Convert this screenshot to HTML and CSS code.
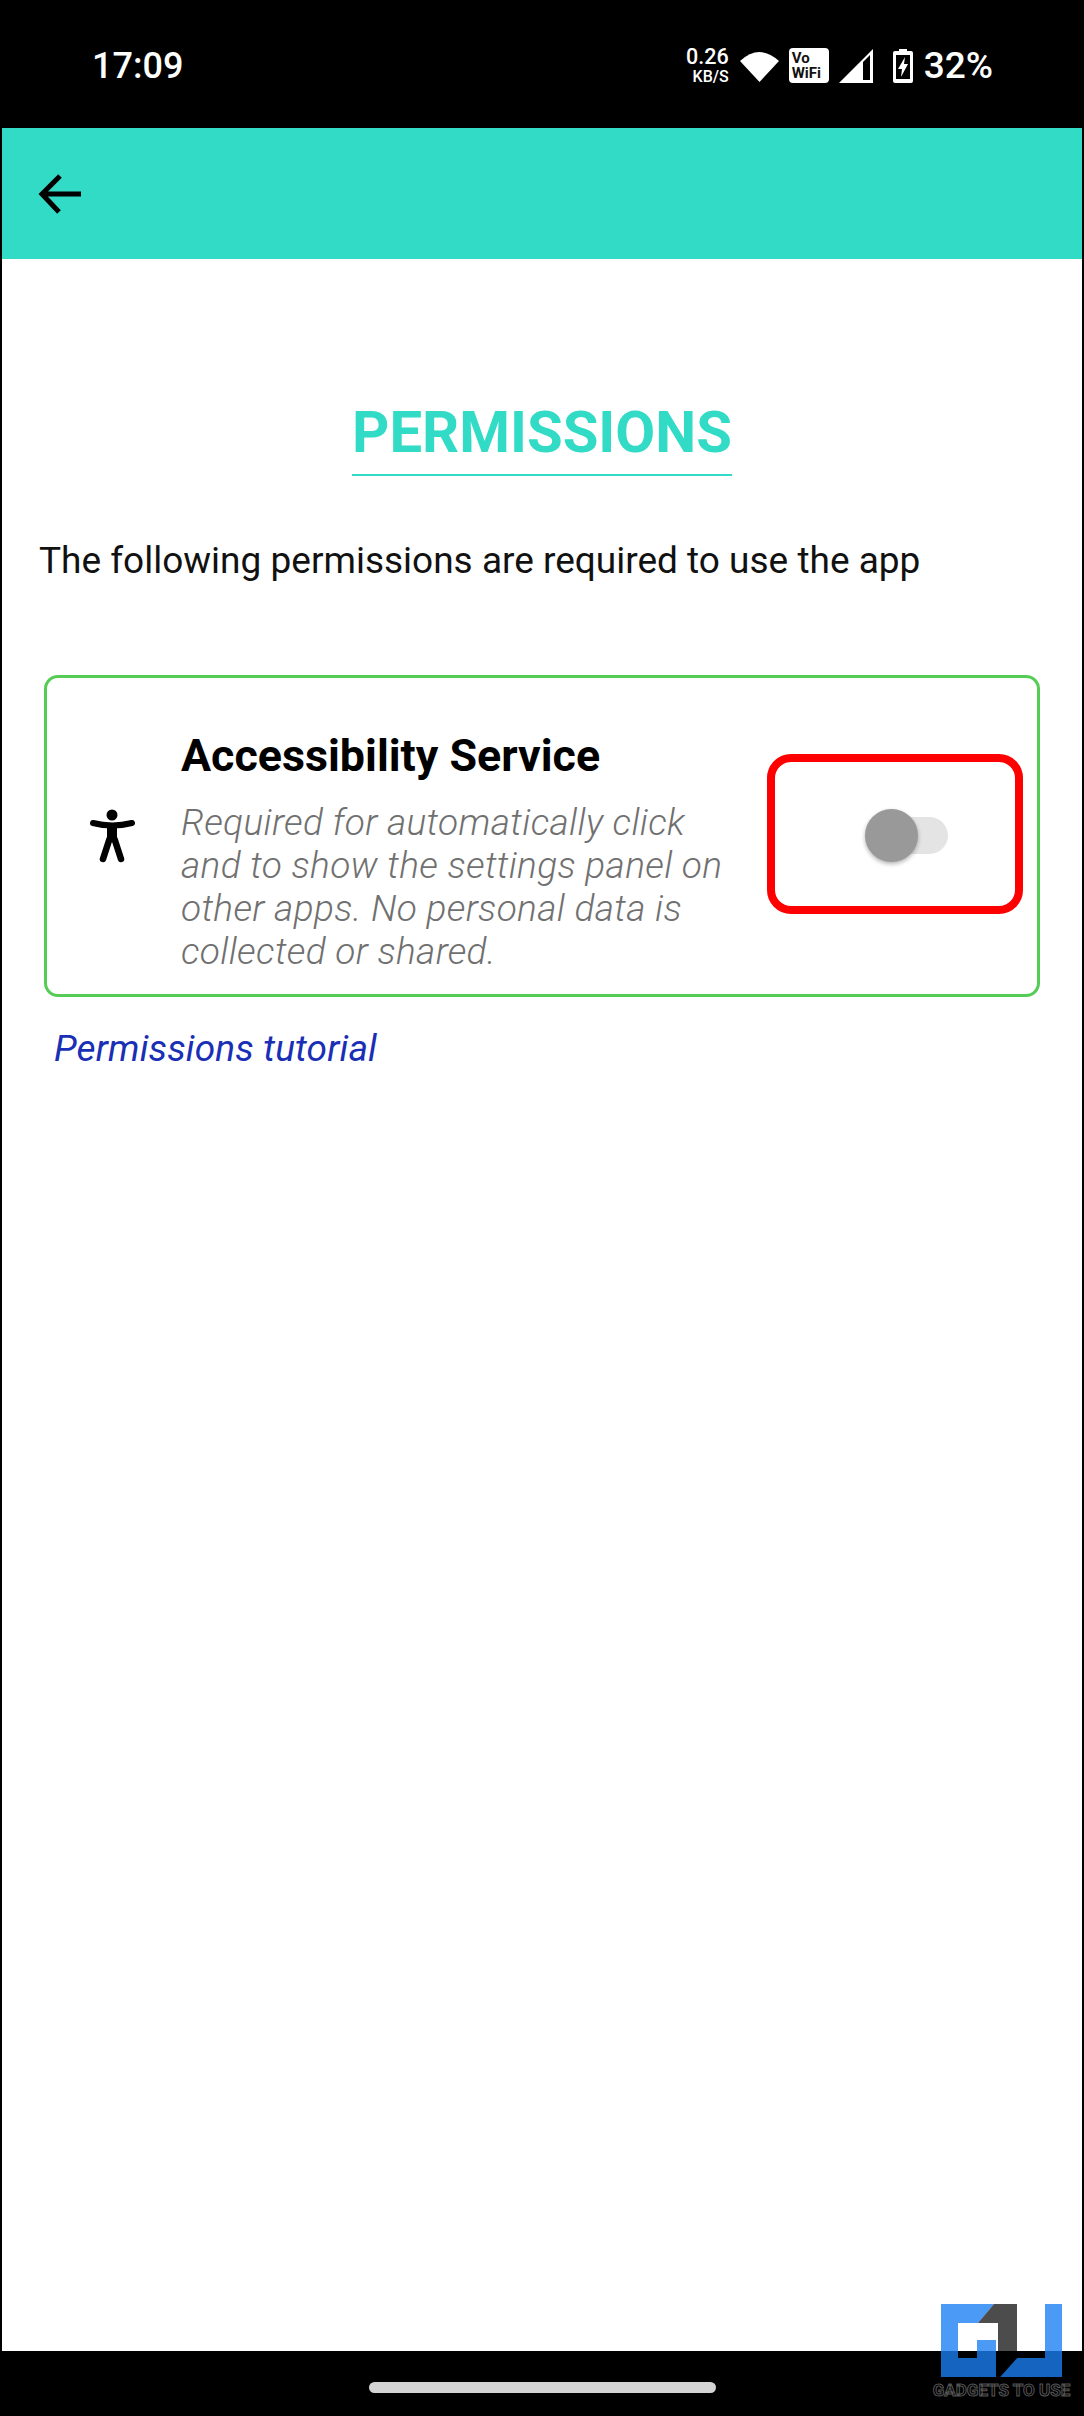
FILE: index.html
```html
<!DOCTYPE html>
<html lang="en">
<head>
  <meta charset="UTF-8">
  <title>Permissions</title>
  <link rel="stylesheet" href="styles.css">
</head>
<body>

<div class="screen">
  <div class="status-bar">
    <span class="clock">17:09</span>
    <div class="status-icons">
      <div class="net-speed"><span>0.26</span><small>KB/S</small></div>
      <svg class="wifi" width="39" height="32" viewBox="0 0 39 32"><path d="M19.5 32 L0 11 Q19.5 -7 39 11 Z" fill="#fff"/></svg>
      <div class="vowifi">Vo<br>WiFi</div>
      <svg class="signal" width="34" height="34" viewBox="0 0 34 34"><path fill="#fff" fill-rule="evenodd" d="M34 0 V34 H0 Z M31 6 L24 13 V31 H31 Z"/></svg>
      <svg class="battery" width="20" height="34" viewBox="0 0 20 34"><path fill="#fff" fill-rule="evenodd" d="M6 0 H14 V2 H18 Q20 2 20 4 V32 Q20 34 18 34 H2 Q0 34 0 32 V4 Q0 2 2 2 H6 Z M3 6 V30 H17 V6 Z"/><path fill="#fff" d="M12 8 L5 20 H9 L8 28 L15 15 H11 Z"/></svg>
      <span class="battery-level">32%</span>
    </div>
  </div>

  <div class="toolbar">
    <svg class="back" width="44" height="44" viewBox="0 0 44 44"><path d="M44 22 H5 M23 4 L5 22 L22 40" fill="none" stroke="#000" stroke-width="5"/></svg>
  </div>

  <main class="content">
    <h1 class="title">PERMISSIONS</h1>
    <p class="intro">The following permissions are required to use the app</p>

    <div class="card">
      <svg class="person" width="46" height="54" viewBox="0 0 46 54">
        <circle cx="22" cy="6" r="5.5"/>
        <path d="M3 14 Q22 19 42 14" fill="none" stroke="#000" stroke-width="6" stroke-linecap="round"/>
        <path d="M22 18 V30" fill="none" stroke="#000" stroke-width="10"/>
        <path d="M19.5 30 L13 50 M24.500 30 L31 50" fill="none" stroke="#000" stroke-width="6.500" stroke-linecap="round"/>
      </svg>
      <div class="card-text">
        <h3>Accessibility Service</h3>
        <p>Required for automatically click and to show the settings panel on other apps. No personal data is collected or shared.</p>
      </div>
      <div class="highlight">
        <div class="switch">
          <div class="thumb"></div>
        </div>
      </div>
    </div>

    <a class="tutorial" href="#">Permissions tutorial</a>
  </main>

  <div class="nav-bar">
    <div class="nav-handle"></div>
  </div>

  <div class="watermark">
    <svg width="123" height="73" viewBox="0 0 123 73">
      <path class="logo-blue" d="M1 0 H54 L38 19 H18 V54 H37 V36 H56 V73 H1 Z"/>
      <path class="logo-blue" d="M105 0 H122 V73 H60 L77 54 H105 Z"/>
      <path class="logo-dark" d="M54 0 H77 V54 L60 73 H58 V19 H38 Z"/>
    </svg>
    <span>GADGETS TO USE</span>
  </div>
</div>

</body>
</html>
```

FILE: styles.css
```css
* {
  box-sizing: border-box;
}

body {
  margin: 0;
  font-family: Roboto, sans-serif;
  background: #fff;
}

.screen {
  position: relative;
  width: 1084px;
  height: 2416px;
  display: flex;
  flex-direction: column;
  background: #fff;
  border-left: 2px solid #000;
  border-right: 2px solid #000;
}

.status-bar {
  height: 128px;
  flex-shrink: 0;
  background: #000;
  color: #fff;
  display: flex;
  justify-content: space-between;
  align-items: center;
  padding: 3px 90px 0 90px;
}

.clock {
  font-size: 36px;
  font-weight: 500;
}

.status-icons {
  display: flex;
  align-items: center;
  gap: 10px;
  margin-right: -1px;
}

.net-speed {
  display: flex;
  flex-direction: column;
  align-items: flex-end;
  font-size: 21.500px;
  line-height: 22px;
  font-weight: 500;
  margin-right: 1px;
}

.net-speed small {
  font-size: 16px;
  line-height: 17px;
}

.vowifi {
  width: 40px;
  height: 35px;
  background: #fff;
  color: #111;
  border-radius: 4px;
  font-size: 15px;
  line-height: 15px;
  font-weight: 700;
  padding: 3px 0 0 3px;
}

.battery {
  margin-left: 10px;
}

.battery-level {
  font-size: 37px;
  font-weight: 500;
  margin-left: 1px;
}

.toolbar {
  height: 131px;
  flex-shrink: 0;
  background: #32dbc6;
  display: flex;
  align-items: center;
  padding-left: 35px;
}

.content {
  flex: 1;
  display: flex;
  flex-direction: column;
  padding: 0 40px;
}

.title {
  align-self: center;
  margin: 142px 0 0;
  padding-bottom: 10px;
  font-size: 58px;
  line-height: 63px;
  font-weight: 700;
  color: #32dbc6;
  border-bottom: 2px solid #32dbc6;
}

.intro {
  margin: 63px 0 0 -3px;
  font-size: 37px;
  line-height: 44px;
  color: #111;
}

.card {
  margin: 92px 2px 0 2px;
  height: 322px;
  display: flex;
  align-items: center;
  border: 3px solid #55cc55;
  border-radius: 14px;
  padding-left: 43px;
}

.person {
  flex-shrink: 0;
  margin-right: 45px;
}

.card-text {
  width: 560px;
  flex-shrink: 0;
  padding-top: 31px;
}

.card-text h3 {
  margin: 0 0 20px;
  font-size: 44.800px;
  line-height: 50px;
  font-weight: 700;
  color: #000;
}

.card-text p {
  margin: 0;
  font-size: 37px;
  line-height: 43px;
  font-style: italic;
  font-weight: 300;
  letter-spacing: 0.35px;
  color: #707070;
}

.highlight {
  width: 256px;
  height: 160px;
  margin: -4px 0 0 26px;
  flex-shrink: 0;
  border: 8px solid #f00;
  border-radius: 24px;
  display: flex;
  align-items: center;
  justify-content: center;
  padding: 2px 0 0 37px;
}

.switch {
  position: relative;
  width: 68px;
  height: 37px;
  background: #e4e4e4;
  border-radius: 19px;
}

.thumb {
  position: absolute;
  left: -15px;
  top: -8px;
  width: 53px;
  height: 53px;
  border-radius: 50%;
  background: #999;
  box-shadow: 0 2px 4px rgba(0, 0, 0, 0.3);
}

.tutorial {
  margin: 30px 0 0 12px;
  font-size: 37px;
  line-height: 44px;
  font-style: italic;
  letter-spacing: 0.15px;
  color: #1a2fb5;
  text-decoration: none;
}

.nav-bar {
  height: 65px;
  flex-shrink: 0;
  background: #000;
  display: flex;
  justify-content: center;
  padding-top: 31px;
}

.nav-handle {
  width: 347px;
  height: 11px;
  background: #d4d4d4;
  border-radius: 6px;
}

.watermark {
  position: absolute;
  left: 932px;
  top: 2304px;
  width: 135px;
  display: flex;
  flex-direction: column;
  align-items: center;
}

.watermark svg {
  display: block;
}

.logo-blue {
  fill: #1b80f3;
  fill-opacity: 0.79;
}

.logo-dark {
  fill: #000;
  fill-opacity: 0.7;
}

.watermark span {
  margin-top: 5px;
  font-size: 17px;
  line-height: 16px;
  font-weight: 700;
  white-space: nowrap;
  color: #000;
  -webkit-text-stroke: 1px #555;
}
```
